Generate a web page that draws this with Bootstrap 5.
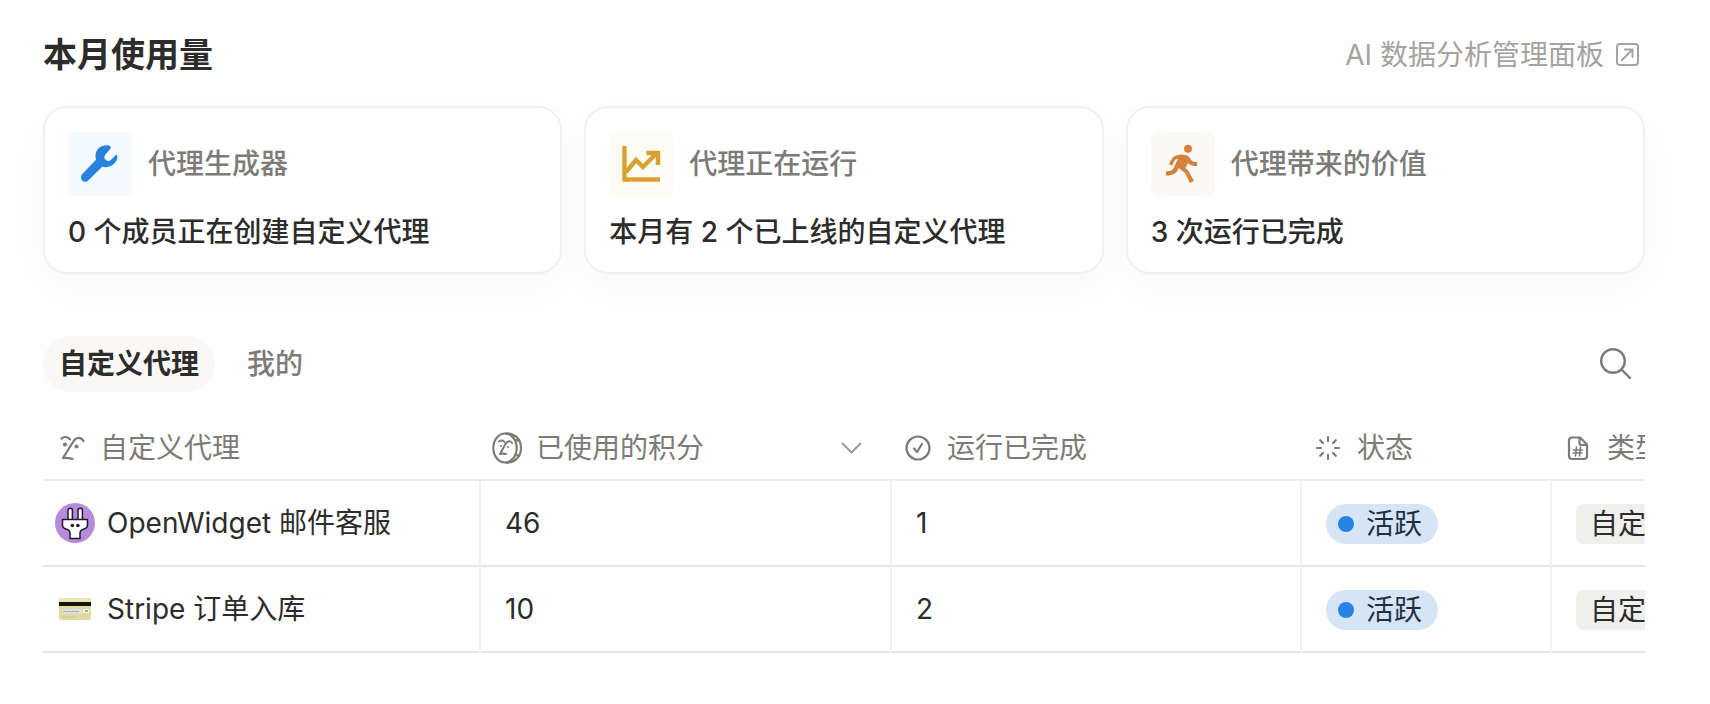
<!DOCTYPE html>
<html lang="zh-CN">
<head>
<meta charset="utf-8">
<meta name="viewport" content="width=device-width, initial-scale=1">
<title>本月使用量</title>
<link href="https://cdn.jsdelivr.net/npm/bootstrap@5.3.0/dist/css/bootstrap.min.css" rel="stylesheet">
<style>
body{font-family:Inter,"Noto Sans CJK SC",sans-serif;font-size:28px;line-height:40px;color:#2c2c2b;background:#fefefe}
.page{padding:31px 65px 48px 43px}
.page-title{font-size:34px;line-height:48px;font-weight:700}
.panel-link{color:#a5a39f;gap:12px;padding-right:5px}
.stats{--bs-gutter-x:22px;--bs-gutter-y:22px;margin-top:5px}
.stat{border:2px solid #f0f0ef;border-radius:24px;background:#fff;padding:24px 23px 20px;box-shadow:0 14px 44px rgba(0,0,0,.025)}
.stat-icon{width:64px;height:64px;border-radius:8px}
.stat-title{color:#7d7b77;font-weight:500}
.tone-blue{background:#f4fafe;color:#2783de}
.tone-yellow{background:#fdfcf4;color:#d9a12f}
.tone-orange{background:#fbf9f6;color:#d5803b}
.tabs{margin-top:62px}
.tab-btn{border:0;border-radius:28px;padding:8px 16px;background:none;color:#7d7b77;font-weight:500}
.tab-btn.active{background:#f9f8f7;color:#2c2c2b;font-weight:700}
.icon-btn{border:0;background:none;padding:0;color:#7d7b77;margin-right:12px}
.table-wrap{overflow:auto hidden;scrollbar-width:none;margin-top:24px}
.agents{table-layout:fixed;width:1810px;border-collapse:collapse}
.agents th{height:64px;padding:0 12px;font-weight:400;color:#7d7b77}
.agents th:first-child{padding-left:15px}
.agents th>div{gap:14px}
.agents th:first-child>div{gap:12px}
.agents td{height:86px;padding:0 24px;border-left:2px solid #f1f1f0}
.agents td:first-child{padding-left:12px;border-left:0}
.agents tr{border-bottom:2px solid #e6e6e5}
.agents thead tr{border-bottom-color:#eeeeed}
.agents tbody a{color:inherit;gap:12px}
.status{background:#d6e5f6;border-radius:20px;padding:0 16px 0 12px;gap:12px;color:#1f2f42}
.status i{width:16px;height:16px;border-radius:50%;background:#2783e6}
.tag{background:#efefed;border-radius:8px;padding:0 14px}
.status,.tag{vertical-align:middle}
svg{display:block;flex:none}
.ln{fill:none;stroke:currentColor;stroke-linecap:round;stroke-linejoin:round}
.c1{width:437px}.c2{width:411px}.c3{width:410px}.c4{width:250px}
</style>
</head>
<body>
<main class="page">
  <header class="d-flex justify-content-between align-items-center">
    <h1 class="page-title m-0">本月使用量</h1>
    <a href="#" class="panel-link d-flex align-items-center text-decoration-none">AI 数据分析管理面板
      <svg class="ln" width="24" height="24" viewBox="0 0 24 24" stroke-width="2"><rect x="1" y="1" width="21" height="21" rx="3"/><path d="M6 17 16.500 6.500M9 6.500h7.500V14"/></svg>
    </a>
  </header>

  <section class="row stats">
    <div class="col-12 col-lg-4"><div class="stat">
      <div class="d-flex align-items-center gap-3">
        <div class="stat-icon tone-blue d-flex align-items-center justify-content-center">
          <svg width="40" height="40" viewBox="0 0 40 40"><path fill="currentColor" d="M29 1.500c-7-1.500-13 3-13.500 10-.1 1.500.1 2.800.5 4.200L2.500 29.800c-2 2-2 4.900-.4 6.700 1.900 1.900 4.900 1.800 6.700-.4L22.200 22.700c7.300 2 15-3 15.300-10.200 0-1.400-1.300-1.800-2.200-1l-4.800 4.800c-1.500 1.200-3.400 1-4.900-.5-1.500-1.500-1.700-3.400-.4-4.900l5-5.800c1-1.200.6-3.100-1.200-3.600z"/></svg>
        </div>
        <span class="stat-title">代理生成器</span>
      </div>
      <div class="fw-medium mt-3">0 个成员正在创建自定义代理</div>
    </div></div>
    <div class="col-12 col-lg-4"><div class="stat">
      <div class="d-flex align-items-center gap-3">
        <div class="stat-icon tone-yellow d-flex align-items-center justify-content-center">
          <svg width="40" height="40" viewBox="0 0 40 40" fill="none" stroke="currentColor" stroke-width="4.400"><path d="M3.500 2v33.500H39"/><path d="m5 28 10-12 7 7L35 10"/><path d="M25.500 9H37v12"/></svg>
        </div>
        <span class="stat-title">代理正在运行</span>
      </div>
      <div class="fw-medium mt-3">本月有 2 个已上线的自定义代理</div>
    </div></div>
    <div class="col-12 col-lg-4"><div class="stat">
      <div class="d-flex align-items-center gap-3">
        <div class="stat-icon tone-orange d-flex align-items-center justify-content-center">
          <svg width="40" height="40" viewBox="0 0 40 40" fill="currentColor"><circle cx="25" cy="4.800" r="4"/><path d="M6 20.500C8 14 12 10.500 18 10.500c4 0 7 1 8.500 3l2 3c1 1.300 2.500 1.500 5.500 1.500v4c-4 0-7-.5-9-3l-2.500 5 3 3L31 37l-4 2-5-10-6.500-5C14 29.500 10 31.500 3 31.500v-4.300c5 0 7.500-1 8.500-5.200l3.500-7.500c-3 .5-4.500 3-5.500 7z"/></svg>
        </div>
        <span class="stat-title">代理带来的价值</span>
      </div>
      <div class="fw-medium mt-3">3 次运行已完成</div>
    </div></div>
  </section>

  <nav class="tabs d-flex align-items-center justify-content-between">
    <div class="d-flex gap-3">
      <button type="button" class="tab-btn active">自定义代理</button>
      <button type="button" class="tab-btn">我的</button>
    </div>
    <button type="button" class="icon-btn" aria-label="搜索"><svg class="ln" width="34" height="34" viewBox="0 0 34 34" stroke-width="2.400"><circle cx="14" cy="14" r="11.800"/><path d="m22.500 22.500 8.500 8.500"/></svg></button>
  </nav>

  <div class="table-wrap">
    <table class="agents">
      <colgroup><col class="c1"><col class="c2"><col class="c3"><col class="c4"><col></colgroup>
      <thead><tr>
        <th scope="col"><div class="d-flex align-items-center">
          <svg class="ln" width="30" height="30" viewBox="0 0 30 30" stroke-width="2.300"><path d="M3.500 5.500c2.500-2 6-2 8.500.8M25.500 8c-2.500-4-7-4-9.500-.5L5 25c3-.5 6 0 9.500.8"/><g fill="currentColor" stroke="none"><circle cx="7" cy="11.500" r="2.100"/><circle cx="18.500" cy="13.500" r="2.100"/></g></svg>
          <span>自定义代理</span></div></th>
        <th scope="col"><div class="d-flex align-items-center">
          <svg class="ln" width="30" height="32" viewBox="0 0 30 32" stroke-width="2.200"><ellipse cx="13" cy="16" rx="11.700" ry="14.500"/><path d="M14 1.500c9-.5 15 6 15 14.500s-6 15-15 14.500M20 3l4 1.500M24 8l3.500 1M25 23l2 1"/><path d="M7 9.500c2-1.500 4-1.500 5.500.5M20 11c-2-2.500-4.500-2.500-6.500 1L8 22c2-.5 4-.5 6 0M9 14v.1M16 15v.1" stroke-width="2"/></svg>
          <span>已使用的积分</span>
          <svg class="ln ms-auto me-3" width="22" height="22" viewBox="0 0 22 22" stroke-width="2" opacity=".75"><path d="m1.500 6.500 9 9 9-9"/></svg></div></th>
        <th scope="col"><div class="d-flex align-items-center">
          <svg class="ln" width="30" height="30" viewBox="0 0 30 30" stroke-width="2.200"><circle cx="15" cy="15" r="11.500"/><path d="m11 15.500 3 3.500 5-8"/></svg>
          <span>运行已完成</span></div></th>
        <th scope="col"><div class="d-flex align-items-center">
          <svg class="ln" width="30" height="30" viewBox="0 0 30 30" stroke-width="2.200"><path d="M15 4v4M15 22v4M4 15h4M22 15h4M7.200 7.200 10 10M20 20l2.800 2.800M22.800 7.200 20 10M10 20l-2.800 2.800"/></svg>
          <span>状态</span></div></th>
        <th scope="col"><div class="d-flex align-items-center">
          <svg class="ln" width="30" height="30" viewBox="0 0 30 30" stroke-width="2.200"><path d="M9 4.500h8l7 7V23a3 3 0 0 1-3 3H9a3 3 0 0 1-3-3V7.500a3 3 0 0 1 3-3zM16.500 5v5a2 2 0 0 0 2 2H23"/><path d="m13.500 14-1 9M17.500 14l-1 9M10.500 17h9M10 20h9" stroke-width="1.600"/></svg>
          <span>类型</span></div></th>
      </tr></thead>
      <tbody>
        <tr>
          <td><a href="#" class="d-flex align-items-center text-decoration-none">
            <svg width="40" height="40" viewBox="0 0 40 40"><circle cx="20" cy="20" r="20" fill="#b68bdc"/><g fill="#fff" stroke="#221a2a" stroke-width="1.500" stroke-linejoin="round"><path d="M13 17V7.500a2.200 2.200 0 0 1 4.400 0V17M23 17V7.500a2.200 2.200 0 0 1 4.400 0V17"/><path d="M7.500 16.500h25V22c0 2-1.500 3.500-3.500 4-2.500.7-4 2-4 4v5.500H15V30c0-2-1.500-3.300-4-4-2.500-.6-3.500-2-3.500-4z"/></g><circle cx="17.300" cy="22.500" r="1.800" fill="#221a2a"/><circle cx="22.900" cy="22.500" r="1.800" fill="#221a2a"/></svg>
            <span>OpenWidget 邮件客服</span></a></td>
          <td>46</td><td>1</td>
          <td><span class="status d-inline-flex align-items-center"><i></i>活跃</span></td>
          <td><span class="tag d-inline-block">自定义代理</span></td>
        </tr>
        <tr>
          <td><a href="#" class="d-flex align-items-center text-decoration-none">
            <svg width="40" height="40" viewBox="0 0 40 40"><rect x="4" y="9" width="32" height="22" rx="2" fill="#dfdaa0"/><path d="M4 13h32v4H4z" fill="#14130f"/><path d="M4 11a2 2 0 0 1 2-2h28a2 2 0 0 1 2 2v2H4z" fill="#ebe7b4"/><path d="M7 20h20v5H7z" fill="#dfe2dd"/><path d="m8 23 2-1 2 1 2-1 2 1 3-1 2 1 3-1" fill="none" stroke="#8d9bb4" stroke-width=".8"/><path d="M28 20h6v4h-6z" fill="#f3f1df"/><path d="M30 22h3" stroke="#777"/><path d="M7 28h14" stroke="#cbc58c"/></svg>
            <span>Stripe 订单入库</span></a></td>
          <td>10</td><td>2</td>
          <td><span class="status d-inline-flex align-items-center"><i></i>活跃</span></td>
          <td><span class="tag d-inline-block">自定义代理</span></td>
        </tr>
      </tbody>
    </table>
  </div>
</main>
<script src="https://cdn.jsdelivr.net/npm/bootstrap@5.3.0/dist/js/bootstrap.bundle.min.js"></script>
</body>
</html>
